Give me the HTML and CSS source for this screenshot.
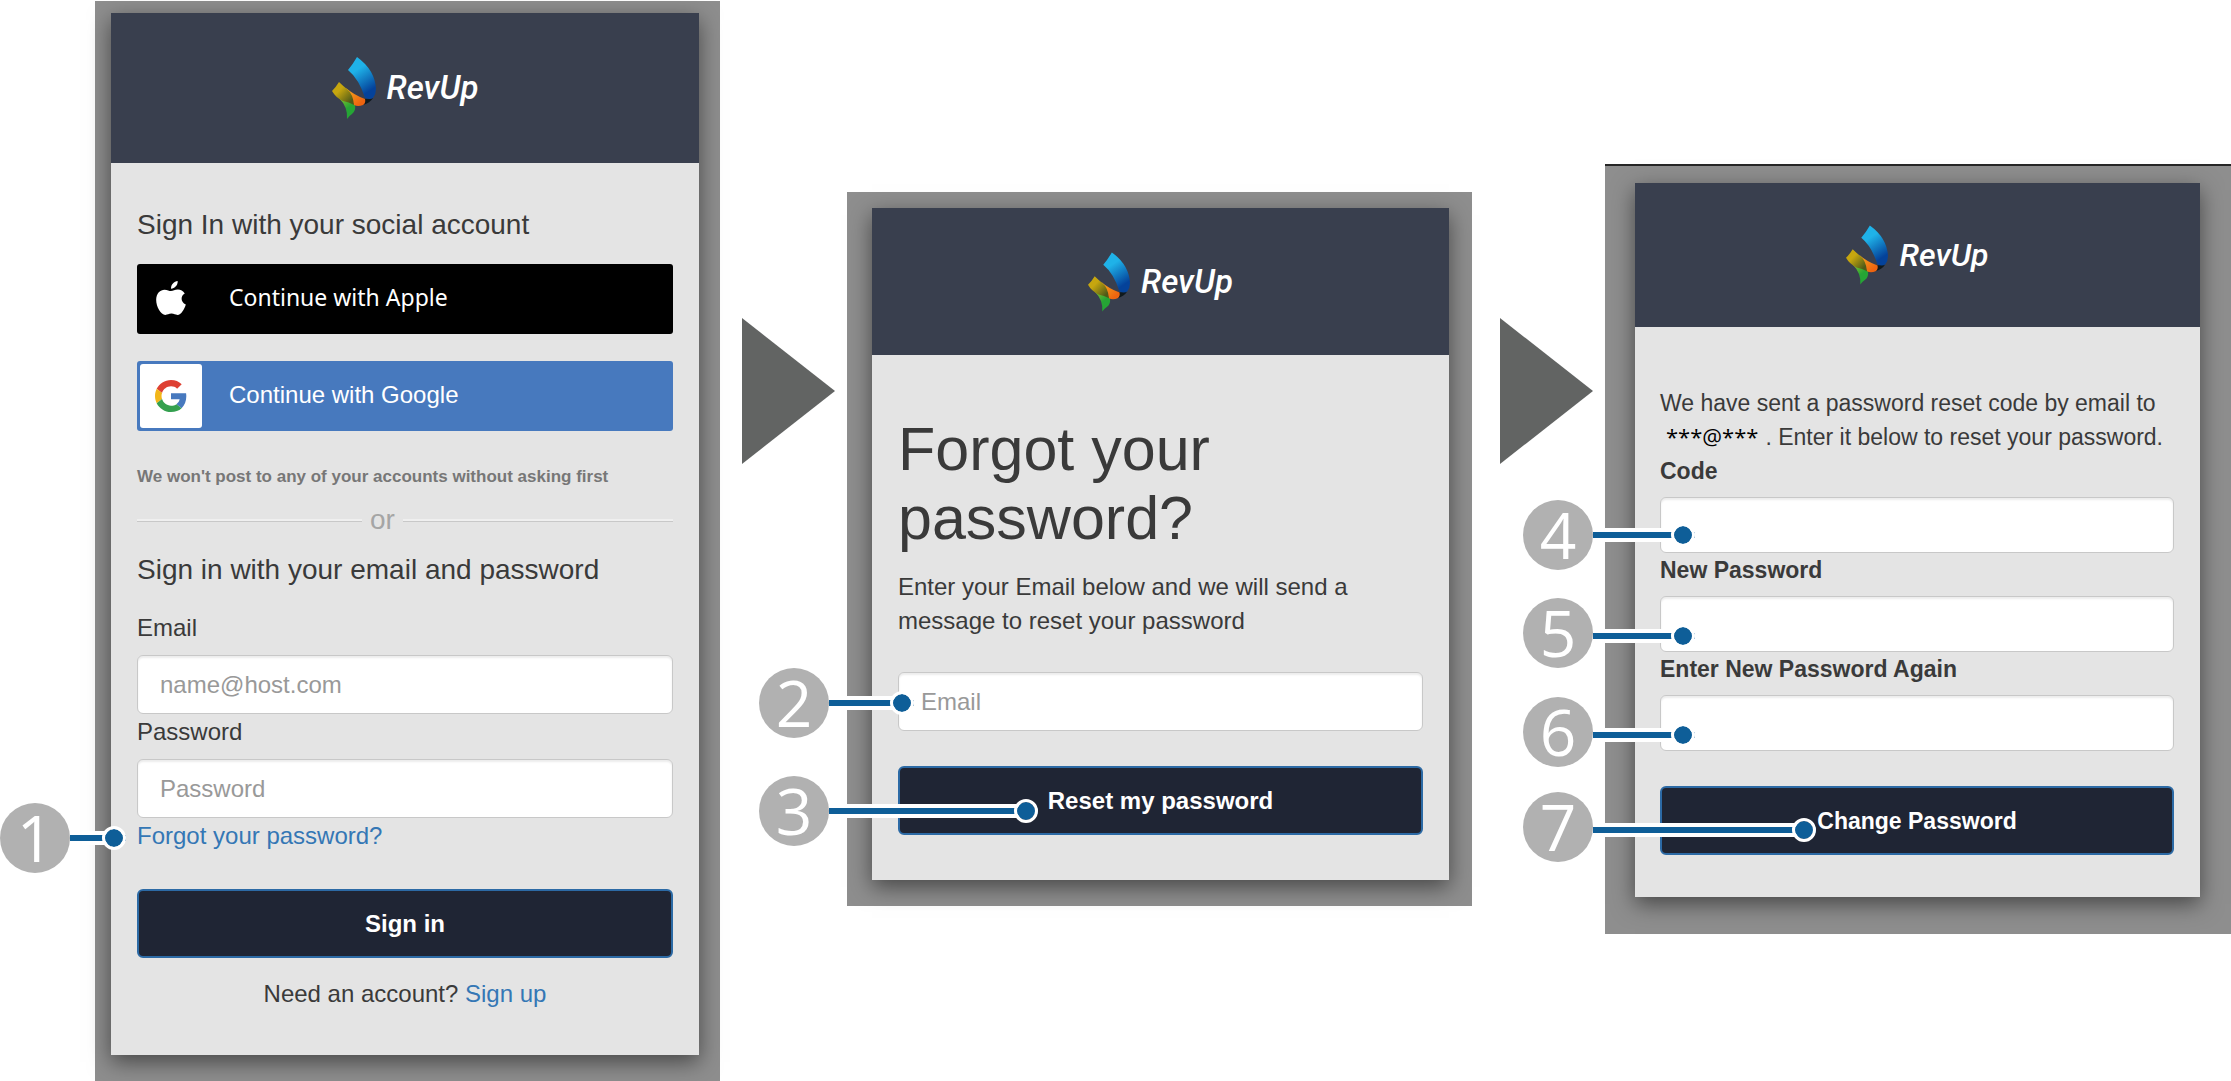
FILE: index.html
```html
<!DOCTYPE html>
<html lang="en">
<head>
    <meta charset="UTF-8">
    <meta name="viewport" content="width=device-width, initial-scale=1.0">
    <title>RevUp - Reset your password</title>
    <link rel="stylesheet" href="styles.css">
</head>
<body>
    <!-- Shared logo mark -->
    <svg class="defs" width="0" height="0" aria-hidden="true">
        <defs>
            <linearGradient id="blue" x1="0.3" y1="0.1" x2="0.7" y2="1">
                <stop offset="0.2" stop-color="#1fb2e8"/>
                <stop offset="0.85" stop-color="#04429a"/>
            </linearGradient>
            <linearGradient id="orange" x1="0" y1="0" x2="1" y2="1">
                <stop offset="0.1" stop-color="#f5a31b"/>
                <stop offset="0.8" stop-color="#ee6410"/>
            </linearGradient>
            <linearGradient id="yellow" x1="0" y1="0" x2="1" y2="1">
                <stop offset="0.35" stop-color="#c6a60f"/>
                <stop offset="0.85" stop-color="#4f5a18"/>
            </linearGradient>
            <linearGradient id="green" x1="0" y1="0" x2="0.6" y2="1">
                <stop offset="0" stop-color="#8cc02c"/>
                <stop offset="0.6" stop-color="#25a535"/>
            </linearGradient>
        </defs>
        <symbol id="mark" viewBox="0 0 44 62">
            <path fill="#10191c" d="M32 42 41 41 Q38 46 31 48Z"/>
            <path fill="url(#blue)" d="M25 0 Q21 7 16 13 Q27 22 33 41 Q38 43 41 41 Q44 37 44 32 Q43 13 25 0Z"/>
            <path fill="url(#green)" d="M7 41 Q15 41 23 48 Q24 54 20 57 Q17 59 15 62 Q16 50 7 41Z"/>
            <path fill="url(#orange)" d="M14 31 Q22 38 33 42 Q34 46 31 48 Q26 50 22 48 Q18 39 14 31Z"/>
            <path fill="url(#yellow)" d="M7 25 Q4 30 0 34 Q4 41 11 44 Q17 45 22 48 Q21 37 15 32 Q11 29 7 25Z"/>
        </symbol>
    </svg>

    <main class="flow">
        <section class="panel panel-signin">
            <div class="card">
                <header class="brand">
                    <svg class="mark"><use href="#mark"/></svg>
                    <span>RevUp</span>
                </header>
                <form class="content">
                    <h2>Sign In with your social account</h2>
                    <button type="button" class="social apple">
                        <span class="social-icon">
                            <svg width="30" height="36" viewBox="0 0 28 34">
                                <path fill="#fff" d="M14 9.500C16 9.500 17.500 8 20.500 8C23 8 25.500 9.400 27 11.700C23 14 22.800 19.500 28 22.200C26.500 27 23.500 32 20.200 32C18 32 17 30.800 14.400 30.800C11.800 30.800 10.800 32 8.600 32C4.500 32 0 24.500 0 18C0 11.500 4 8.200 7.900 8.200C10.500 8.200 12.500 9.500 14 9.500Z"/>
                                <path fill="#fff" d="M14 7.300C13.800 3.500 17 0.200 20.300 0C20.600 3.800 17.500 7.300 14 7.300Z"/>
                            </svg>
                        </span>
                        <span class="social-text">Continue with Apple</span>
                    </button>
                    <button type="button" class="social google">
                        <span class="social-icon">
                            <svg width="32" height="32" viewBox="0 0 48 48">
                                <path fill="#de4032" d="M24 9.500c3.540 0 6.710 1.220 9.210 3.600l6.850-6.850C35.900 2.380 30.470 0 24 0 14.620 0 6.510 5.380 2.560 13.220l7.980 6.190C12.430 13.720 17.740 9.500 24 9.500z"/>
                                <path fill="#4779be" d="M46.980 24.550c0-1.570-.15-3.090-.38-4.550H24v9.020h12.940c-.58 2.960-2.260 5.480-4.780 7.180l7.730 6c4.510-4.180 7.090-10.360 7.090-17.650z"/>
                                <path fill="#f2b619" d="M10.530 28.590c-.48-1.450-.76-2.990-.76-4.590s.27-3.140.76-4.590l-7.980-6.190C.92 16.460 0 20.120 0 24s.92 7.540 2.560 10.780l7.970-6.190z"/>
                                <path fill="#34a04f" d="M24 48c6.480 0 11.930-2.130 15.890-5.810l-7.730-6c-2.150 1.450-4.920 2.300-8.160 2.300-6.260 0-11.570-4.220-13.470-9.910l-7.980 6.190C6.510 42.620 14.620 48 24 48z"/>
                            </svg>
                        </span>
                        <span class="social-text">Continue with Google</span>
                    </button>
                    <p class="note">We won't post to any of your accounts without asking first</p>
                    <div class="divider"><span>or</span></div>
                    <h2 class="email-title">Sign in with your email and password</h2>
                    <label for="signin-email">Email</label>
                    <div class="field"><input type="email" id="signin-email" placeholder="name@host.com"></div>
                    <label for="signin-password">Password</label>
                    <div class="field"><input type="password" id="signin-password" placeholder="Password"></div>
                    <div class="field">
                        <a href="#forgot">Forgot your password?</a>
                        <div class="callout callout-1"><b>1</b><i></i></div>
                    </div>
                    <div class="field action"><button type="submit" class="primary">Sign in</button></div>
                    <p class="signup">Need an account? <a href="#signup">Sign up</a></p>
                </form>
            </div>
        </section>

        <svg class="arrow" viewBox="0 0 93 146" aria-hidden="true"><path d="M0 0 93 73 0 146Z"/></svg>

        <section class="panel panel-forgot" id="forgot">
            <div class="card">
                <header class="brand">
                    <svg class="mark"><use href="#mark"/></svg>
                    <span>RevUp</span>
                </header>
                <form class="content">
                    <h1>Forgot your password?</h1>
                    <p>Enter your Email below and we will send a message to reset your password</p>
                    <div class="field">
                        <input type="email" placeholder="Email" aria-label="Email">
                        <div class="callout callout-2"><b>2</b><i></i></div>
                    </div>
                    <div class="field action">
                        <button type="submit" class="primary">Reset my password</button>
                        <div class="callout callout-3"><b>3</b><i></i></div>
                    </div>
                </form>
            </div>
        </section>

        <svg class="arrow" viewBox="0 0 93 146" aria-hidden="true"><path d="M0 0 93 73 0 146Z"/></svg>

        <section class="panel panel-change">
            <div class="card">
                <header class="brand">
                    <svg class="mark"><use href="#mark"/></svg>
                    <span>RevUp</span>
                </header>
                <form class="content">
                    <p>We have sent a password reset code by email to <span class="masked">***@***</span>. Enter it below to reset your password.</p>
                    <label for="code">Code</label>
                    <div class="field">
                        <input type="text" id="code">
                        <div class="callout callout-4"><b>4</b><i></i></div>
                    </div>
                    <label for="new-password">New Password</label>
                    <div class="field">
                        <input type="password" id="new-password">
                        <div class="callout callout-5"><b>5</b><i></i></div>
                    </div>
                    <label for="new-password-again">Enter New Password Again</label>
                    <div class="field">
                        <input type="password" id="new-password-again">
                        <div class="callout callout-6"><b>6</b><i></i></div>
                    </div>
                    <div class="field action">
                        <button type="submit" class="primary">Change Password</button>
                        <div class="callout callout-7"><b>7</b><i></i></div>
                    </div>
                </form>
            </div>
        </section>
    </main>
</body>
</html>
```
FILE: styles.css
```css
/* Page */
* {
    box-sizing: border-box;
}

body {
    margin: 0;
    background-color: #fff;
    color: #3a3a3a;
    font-family: "Liberation Sans", Arial, sans-serif;
    font-size: 24px;
    line-height: 34px;
}

h1, h2, p {
    margin: 0;
    font-weight: normal;
}

a {
    color: #3477b5;
    text-decoration: none;
}

.defs {
    position: absolute;
}

/* Three screens with an arrow between each */
.flow {
    display: grid;
    grid-template-columns: 625fr 127fr 625fr 133fr 626fr;
    align-items: start;
    padding: 1px 0 0 95px;
}

.arrow {
    justify-self: end;
    width: 93px;
    height: 146px;
    margin: 317px 12px 0 0;
    fill: #626463;
}

.panel {
    background-color: #8e8e8e;
}

.panel-signin {
    padding: 12px 21px 27px 16px;
}

.panel-forgot {
    margin-top: 191px;
    padding: 16px 23px 26px 25px;
}

.panel-change {
    margin-top: 163px;
    padding: 17px 31px 37px 30px;
    border-top: 2px solid #262626;
    font-size: 23px;
}

.card {
    background-color: #e4e4e4;
    box-shadow: 0 7px 21px rgba(0, 0, 0, 0.5);
}

.brand {
    display: flex;
    align-items: center;
    justify-content: center;
    gap: 11px;
    height: 150px;
    background-color: #393f4e;
    color: #fff;
    font: italic 500 33px/36px Roboto, sans-serif;
}

.mark {
    width: 44px;
    height: 62px;
}

.panel-forgot .brand {
    height: 147px;
}

.panel-change .brand {
    height: 144px;
    font-size: 32px;
}

.panel-forgot .mark,
.panel-change .mark {
    width: 42px;
    height: 60px;
}

.content {
    padding: 44px 26px 43px;
}

.panel-forgot .content {
    padding: 60px 26px 45px;
}

.panel-change .content {
    padding: 59px 26px 42px 25px;
}

/* Form controls */
label {
    display: block;
    margin-bottom: 9px;
}

.field {
    position: relative;
}

input {
    display: block;
    width: 100%;
    height: 59px;
    padding: 0 22px;
    border: 1px solid #c8c8c8;
    border-radius: 6px;
    background-color: #fff;
    box-shadow: inset 0 2px 2px rgba(0, 0, 0, 0.08);
    font: inherit;
}

input::placeholder {
    color: #999;
    opacity: 1;
}

.primary {
    display: block;
    width: 100%;
    height: 69px;
    border: 2px solid #2c6aa5;
    border-radius: 6px;
    background-color: #1f2534;
    color: #fff;
    font: inherit;
    font-weight: bold;
}

.action {
    margin-top: 35px;
}

/* Sign in */
.panel-signin .content {
    line-height: 36px;
}

h2 {
    font-size: 28px;
    line-height: 36px;
}

.social {
    display: flex;
    align-items: stretch;
    width: 100%;
    height: 70px;
    padding: 3px;
    border: 0;
    border-radius: 3px;
    color: #fff;
    text-align: left;
}

.apple {
    margin: 21px 0 27px;
    background-color: #000;
    font: 23px/60px "Noto Sans", sans-serif;
}

.google {
    background-color: #4779be;
    font: 24px/62px "Liberation Sans", Arial, sans-serif;
}

.social-icon {
    display: flex;
    align-items: center;
    justify-content: center;
    width: 62px;
    margin-right: 27px;
    border-radius: 3px;
}

.google .social-icon {
    background-color: #fff;
}

.note {
    margin: 33px 0 12px;
    color: #777;
    font-size: 17px;
    font-weight: bold;
    line-height: 26px;
}

.divider {
    display: flex;
    align-items: center;
    gap: 8px;
    margin-bottom: 14px;
    color: #a5a5a5;
    font-size: 28px;
}

.divider::before,
.divider::after {
    content: "";
    flex: 5;
    border-top: 2px solid #efefef;
    border-bottom: 1px solid #c8c8c8;
}

.divider::after {
    flex: 6;
}

.email-title {
    margin-bottom: 22px;
}

.signup {
    margin-top: 18px;
    text-align: center;
}

/* Forgot password */
h1 {
    margin-bottom: 17px;
    font-size: 61px;
    line-height: 69px;
}

.panel-forgot p {
    margin-bottom: 34px;
}

/* Change password */
.panel-change label {
    font-weight: bold;
}

.panel-change input {
    height: 56px;
}

.masked {
    padding: 0 7px 0 6px;
    color: #000;
    font-family: "Open Sans", sans-serif;
    font-size: 22px;
    line-height: 1;
}

/* Numbered callouts lying over the screens */
.callout {
    position: absolute;
    left: -137px;
    z-index: 1;
    display: flex;
    align-items: center;
    pointer-events: none;
}

.callout b {
    flex: none;
    width: 70px;
    height: 70px;
    border-radius: 50%;
    background-color: #b1b1b1;
    color: #fff;
    font: 64px/70px "Open Sans", sans-serif;
    text-align: center;
}

.callout i {
    position: relative;
    flex: 1;
    height: 6px;
    background-color: #0e5e98;
}

/* white outline, starts past the circle */
.callout i::before {
    content: "";
    position: absolute;
    inset: -4px 12px -4px 12px;
    z-index: -1;
    background-color: #fff;
}

.callout i::after {
    content: "";
    position: absolute;
    top: -9px;
    right: 0;
    width: 18px;
    height: 18px;
    border: 3px solid #fff;
    border-radius: 50%;
    background: linear-gradient(#0e5e98, #0e5e98) padding-box;
}

.callout-1 {
    top: -15px;
    width: 126px;
}

.callout-2,
.callout-3 {
    left: -139px;
}

.callout-2 {
    top: -4px;
    width: 155px;
}

.callout-3 {
    top: 10px;
    width: 279px;
}

.callout-4 {
    top: 3px;
    width: 172px;
}

.callout-5,
.callout-6 {
    top: 2px;
    width: 172px;
}

.callout-7 {
    top: 6px;
    width: 293px;
}

.callout-5 b,
.callout-6 b,
.callout-7 b {
    margin-bottom: 6px;
}
```
